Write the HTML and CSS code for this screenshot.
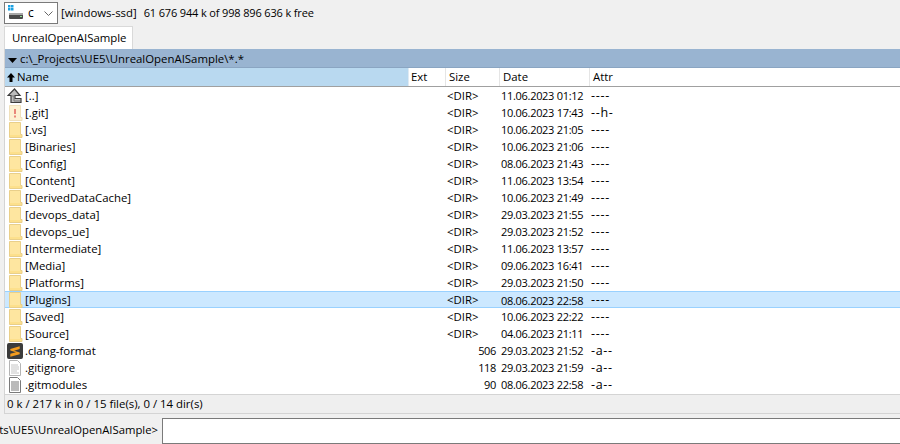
FILE: index.html
```html
<!DOCTYPE html>
<html lang="en">
<head>
<meta charset="utf-8">
<title>Total Commander</title>
<link rel="stylesheet" href="styles.css">
</head>
<body>
<svg class="defs" width="0" height="0" aria-hidden="true">
  <symbol id="folder" viewBox="0 0 16 16">
    <path d="M2.500 .5H13.500V12.500H15V15.500H2.500Z" fill="#fde08c" stroke="#e9cf8a"/>
    <path d="M3 1H13V13H3Z" fill="#fee6a0"/>
  </symbol>
  <symbol id="gitfolder" viewBox="0 0 16 16">
    <path d="M2.500 .5H13.500V12.500H15V15.500H2.500Z" fill="#fdf1d2" stroke="#efe0bc"/>
    <path d="M7 4H9V9H7ZM7 10.500H9V12.500H7Z" fill="#e9877a"/>
  </symbol>
  <symbol id="up" viewBox="0 0 16 16">
    <path d="M7.500 1L1 7.500H4V14.500H14V10.500H8V7.500H13Z" fill="#bcbcbc" stroke="#3c3c3c" stroke-width="1.200"/>
    <path d="M5 8H7V13H13" fill="none" stroke="#777"/>
  </symbol>
  <symbol id="sublime" viewBox="0 0 17 17">
    <rect width="17" height="17" rx="2" fill="#3c3c3c"/>
    <path d="M3.500 6.500L13.500 3.500V6.500L7.500 8.200L13.500 10V12L3.500 14.500V11.500L9.500 9.800L3.500 8Z" fill="#f39c1e"/>
  </symbol>
  <symbol id="doc" viewBox="0 0 16 16">
    <path d="M2.500 .5H10.500L13.500 3.500V15.500H2.500Z" fill="#fff" stroke="#b4b4b4"/>
    <path d="M4 5H11M4 7H12M4 9H12M4 11H10M4 13H12" stroke="#c4c4c4"/>
  </symbol>
  <symbol id="docdark" viewBox="0 0 16 16">
    <path d="M2.500 .5H10.500L13.500 3.500V15.500H2.500Z" fill="#fff" stroke="#7a7a7a"/>
    <path d="M4 5H12M4 7H12M4 9H12M4 11H12M4 13H12" stroke="#777"/>
  </symbol>
</svg>

<header class="drivebar">
  <div class="combo">
    <svg class="drive" width="17" height="16" viewBox="0 0 17 16">
      <path d="M1 0H3.500V2.500H1ZM4 0H6.500V2.500H4ZM1 3H3.500V5.500H1ZM4 3H6.500V5.500H4Z" fill="#1ba1e2"/>
      <rect x="2" y="9" width="14" height="5" rx="1" fill="#4a4a4a"/>
      <rect x="2" y="8" width="14" height="2" fill="#a8a8a8"/>
      <rect x="13" y="11" width="2" height="1" fill="#8fe08f"/>
    </svg>
    <span class="drive-letter">c</span>
    <svg class="chevron" width="9" height="6" viewBox="0 0 9 6"><path d="M.5 .5L4.500 4.500L8.500 .5" fill="none" stroke="#666"/></svg>
  </div>
  <span class="drive-label">[windows-ssd]</span>
  <span class="drive-free">61 676 944 k of 998 896 636 k free</span>
</header>

<nav class="tabs"><div class="tab">UnrealOpenAISample</div></nav>

<main class="panel">
  <div class="pathbar">
    <svg class="path-arrow" width="9" height="5" viewBox="0 0 9 5"><path d="M0 0H9L4.500 5Z" fill="#000"/></svg>
    <span>c:\_Projects\UE5\UnrealOpenAISample\*.*</span>
  </div>
  <div class="heads">
    <div class="head head-name">
      <svg width="8" height="9" viewBox="0 0 8 9"><path d="M4 0L8 4.500H5.500V9H2.500V4.500H0Z" fill="#000"/></svg>
      <span>Name</span>
    </div>
    <div class="head head-ext">Ext</div>
    <div class="head">Size</div>
    <div class="head">Date</div>
    <div class="head head-last">Attr</div>
  </div>
  <div class="list">
    <div class="row"><svg class="ico"><use href="#up"/></svg><span class="name">[..]</span><span></span><span class="size">&lt;DIR&gt;</span><span class="date">11.06.2023 01:12</span><span class="attr">----</span></div>
    <div class="row"><svg class="ico"><use href="#gitfolder"/></svg><span class="name">[.git]</span><span></span><span class="size">&lt;DIR&gt;</span><span class="date">10.06.2023 17:43</span><span class="attr">--h-</span></div>
    <div class="row"><svg class="ico"><use href="#folder"/></svg><span class="name">[.vs]</span><span></span><span class="size">&lt;DIR&gt;</span><span class="date">10.06.2023 21:05</span><span class="attr">----</span></div>
    <div class="row"><svg class="ico"><use href="#folder"/></svg><span class="name">[Binaries]</span><span></span><span class="size">&lt;DIR&gt;</span><span class="date">10.06.2023 21:06</span><span class="attr">----</span></div>
    <div class="row"><svg class="ico"><use href="#folder"/></svg><span class="name">[Config]</span><span></span><span class="size">&lt;DIR&gt;</span><span class="date">08.06.2023 21:43</span><span class="attr">----</span></div>
    <div class="row"><svg class="ico"><use href="#folder"/></svg><span class="name">[Content]</span><span></span><span class="size">&lt;DIR&gt;</span><span class="date">11.06.2023 13:54</span><span class="attr">----</span></div>
    <div class="row"><svg class="ico"><use href="#folder"/></svg><span class="name">[DerivedDataCache]</span><span></span><span class="size">&lt;DIR&gt;</span><span class="date">10.06.2023 21:49</span><span class="attr">----</span></div>
    <div class="row"><svg class="ico"><use href="#folder"/></svg><span class="name">[devops_data]</span><span></span><span class="size">&lt;DIR&gt;</span><span class="date">29.03.2023 21:55</span><span class="attr">----</span></div>
    <div class="row"><svg class="ico"><use href="#folder"/></svg><span class="name">[devops_ue]</span><span></span><span class="size">&lt;DIR&gt;</span><span class="date">29.03.2023 21:52</span><span class="attr">----</span></div>
    <div class="row"><svg class="ico"><use href="#folder"/></svg><span class="name">[Intermediate]</span><span></span><span class="size">&lt;DIR&gt;</span><span class="date">11.06.2023 13:57</span><span class="attr">----</span></div>
    <div class="row"><svg class="ico"><use href="#folder"/></svg><span class="name">[Media]</span><span></span><span class="size">&lt;DIR&gt;</span><span class="date">09.06.2023 16:41</span><span class="attr">----</span></div>
    <div class="row"><svg class="ico"><use href="#folder"/></svg><span class="name">[Platforms]</span><span></span><span class="size">&lt;DIR&gt;</span><span class="date">29.03.2023 21:50</span><span class="attr">----</span></div>
    <div class="row row-selected"><svg class="ico"><use href="#folder"/></svg><span class="name">[Plugins]</span><span></span><span class="size">&lt;DIR&gt;</span><span class="date">08.06.2023 22:58</span><span class="attr">----</span></div>
    <div class="row"><svg class="ico"><use href="#folder"/></svg><span class="name">[Saved]</span><span></span><span class="size">&lt;DIR&gt;</span><span class="date">10.06.2023 22:22</span><span class="attr">----</span></div>
    <div class="row"><svg class="ico"><use href="#folder"/></svg><span class="name">[Source]</span><span></span><span class="size">&lt;DIR&gt;</span><span class="date">04.06.2023 21:11</span><span class="attr">----</span></div>
    <div class="row"><svg class="ico"><use href="#sublime"/></svg><span class="name">.clang-format</span><span></span><span class="size num">506</span><span class="date">29.03.2023 21:52</span><span class="attr">-a--</span></div>
    <div class="row"><svg class="ico"><use href="#doc"/></svg><span class="name">.gitignore</span><span></span><span class="size num">118</span><span class="date">29.03.2023 21:59</span><span class="attr">-a--</span></div>
    <div class="row"><svg class="ico"><use href="#docdark"/></svg><span class="name">.gitmodules</span><span></span><span class="size num">90</span><span class="date">08.06.2023 22:58</span><span class="attr">-a--</span></div>
    <div class="row"><svg class="ico"><use href="#doc"/></svg></div>
  </div>
  <div class="status">0 k / 217 k in 0 / 15 file(s), 0 / 14 dir(s)</div>
</main>

<footer class="cmd">
  <div class="prompt"><span>c:\_Projects\UE5\UnrealOpenAISample&gt;</span></div>
  <div class="cmd-input"></div>
</footer>
</body>
</html>
```
FILE: styles.css
```css
* { box-sizing: border-box; }
html, body { margin: 0; height: 444px; overflow: hidden; }
body {
  background: #f0f0f0;
  color: #000;
  font: 11.4px/16px "Open Sans", "Noto Sans", sans-serif;
  display: flex;
  flex-direction: column;
}
.defs { position: absolute; }

.drivebar {
  height: 26px;
  padding: 2px 0 0 4px;
  display: flex;
  align-items: flex-start;
  gap: 3px;
  flex: none;
}
.combo {
  width: 54px;
  height: 22px;
  background: #fff;
  border: 1px solid #7a7a7a;
  display: flex;
  align-items: center;
  padding-left: 2px;
  position: relative;
}
.drive-letter { margin-left: 4px; font-size: 12px; }
.chevron { position: absolute; right: 4px; top: 8px; }
.drive-label { line-height: 22px; }
.drive-free { line-height: 22px; margin-left: 4px; font-size: 11px; letter-spacing: -.15px; }

.tabs { height: 23px; padding-left: 4px; flex: none; display: flex; }
.tab {
  width: 129px;
  height: 23px;
  background: #fff;
  border: 1px solid #d9d9d9;
  border-bottom: 0;
  padding: 3px 0 0 7px;
}

.panel {
  height: 365px;
  margin-left: 4px;
  flex: none;
  display: flex;
  flex-direction: column;
  border-left: 1px solid #d4d4d4;
}
.pathbar {
  height: 19px;
  flex: none;
  background: #99b4d1;
  display: flex;
  align-items: center;
  gap: 3px;
  padding: 1px 0 0 3px;
  border-bottom: 1px solid #8aa5c2;
}
.path-arrow { margin-top: 3px; }

.heads {
  height: 19px;
  flex: none;
  display: grid;
  grid-template-columns: 404px 37px 54px 90px 1fr;
  border-bottom: 1px solid #a0a0a0;
  background: #fff;
}
.head {
  padding-left: 3px;
  line-height: 18px;
  border-right: 1px solid #e5e5e5;
}
.head-ext { padding-left: 2px; }
.head-name {
  background: #b9d9f0;
  border-right: 1px solid #dfeaf3;
  display: flex;
  align-items: center;
  gap: 2px;
  padding-left: 2px;
}
.head-last { border-right: 0; }

.list { flex: 1; overflow: hidden; background: #fff; min-height: 0; }
.row {
  height: 17px;
  display: grid;
  grid-template-columns: 18px 387px 37px 53px 90px 1fr;
  align-items: center;
  line-height: 15px;
  white-space: nowrap;
}
.row-selected {
  background: #cce8ff;
  border-top: 1px solid #99d1ff;
  border-bottom: 1px solid #99d1ff;
}
.ico { width: 16px; height: 16px; margin-left: 2px; display: block; }
.name, .size, .attr { align-self: start; line-height: 16px; padding-top: 1px; }
.row-selected .name, .row-selected .size, .row-selected .attr { margin-top: -1px; }
.name { padding-left: 2px; }
.num { align-self: center; line-height: 15px; padding-top: 0; text-align: right; padding-right: 4px; font-size: 11px; letter-spacing: -.35px; }
.date { padding-left: 1px; font-size: 11px; letter-spacing: -.3px; }
.attr { padding-left: 1px; font-size: 12.500px; letter-spacing: .7px; }

.status {
  height: 20px;
  flex: none;
  background: #efefef;
  border-top: 1px solid #d4d4d4;
  border-bottom: 1px solid #d4d4d4;
  padding-left: 2px;
  line-height: 18px;
}

.cmd {
  flex: 1;
  display: flex;
  margin-top: 4px;
  gap: 4px;
  min-height: 0;
}
.prompt {
  width: 158px;
  display: flex;
  justify-content: flex-end;
  overflow: hidden;
  white-space: nowrap;
  line-height: 23px;
  flex: none;
  font-size: 11.3px;
}
.prompt span { flex: none; }
.cmd-input {
  flex: 1;
  background: #fff;
  border: 1px solid #7a7a7a;
  border-right: 0;
}
```
